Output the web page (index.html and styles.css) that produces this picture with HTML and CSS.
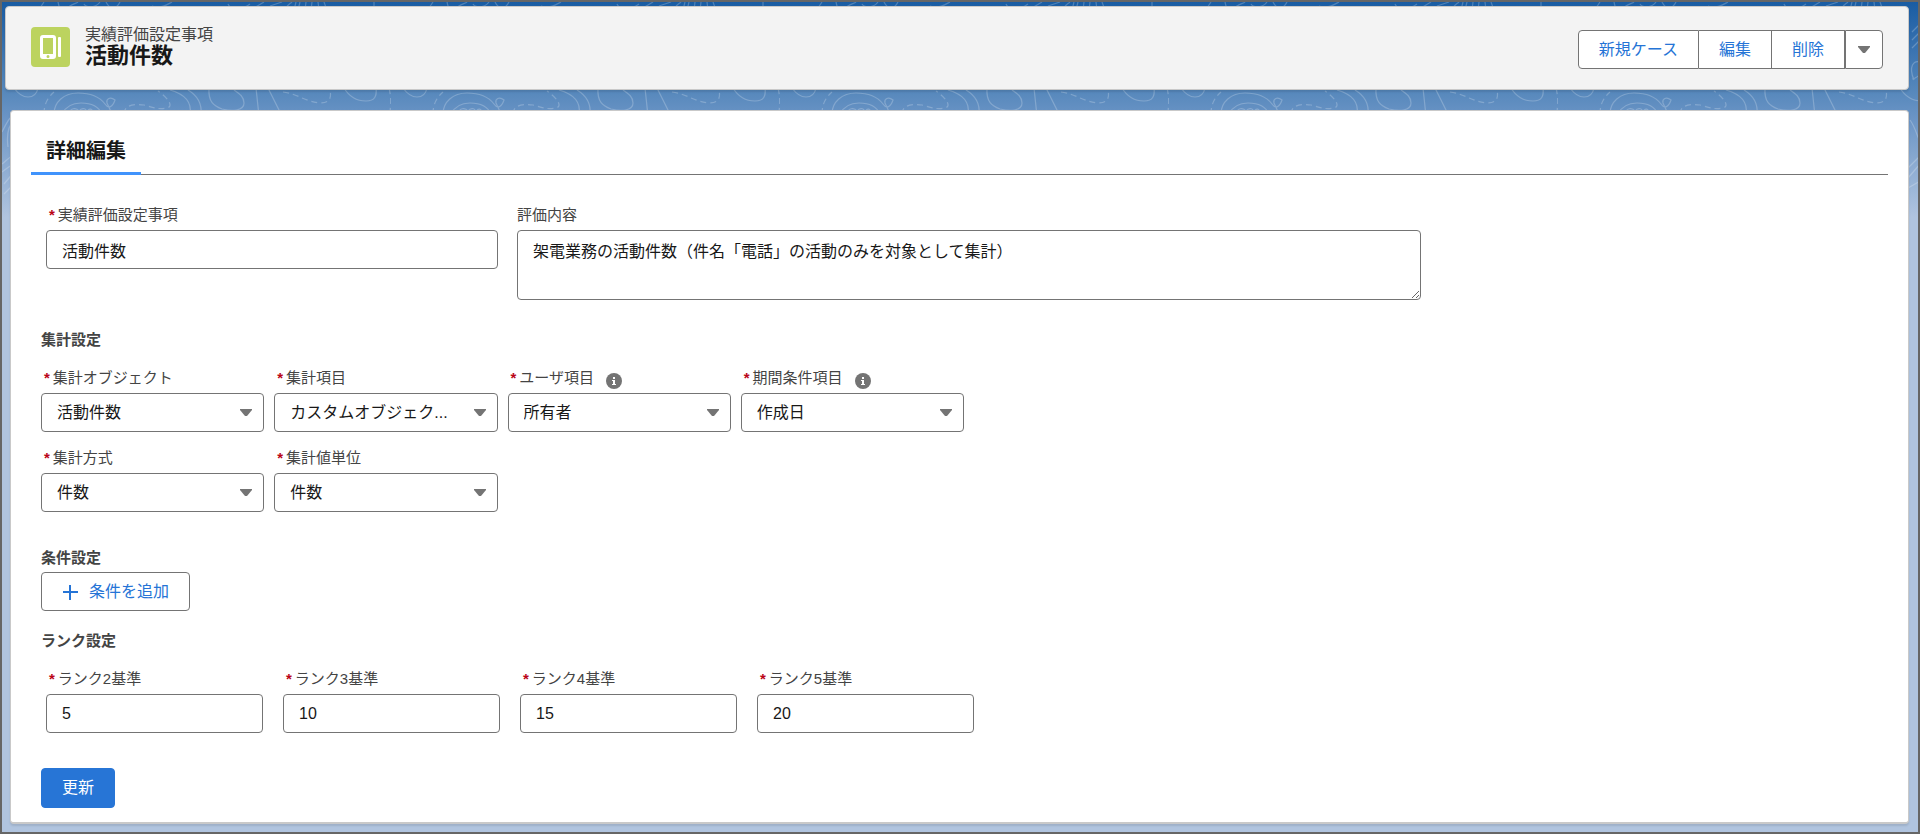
FILE: index.html
```html
<!DOCTYPE html>
<html lang="ja">
<head>
<meta charset="utf-8">
<meta name="viewport" content="width=device-width, initial-scale=1">
<title>活動件数 | 実績評価設定事項</title>
<link rel="stylesheet" href="styles.css">
</head>
<body>
<div class="frame">
  <svg class="backdrop" aria-hidden="true">
    <defs>
      <pattern id="topo" width="389" height="220" patternUnits="userSpaceOnUse">
        <g fill="none" stroke="#fff" stroke-opacity=".22" stroke-width="1.2">
          <path d="M52 112C52 100 62 91 76 91C88 91 97 94 103 102C107 108 111 104 113 98C108 94 104 97 105 101M105 101L110 112"/>
          <path d="M60 112C64 104 70 101 79 101C90 101 97 105 100 112"/>
          <path d="M67 112C68 106 74 105 77 109C80 105 86 106 84 112M86 108C90 105 92 110 89 113"/>
          <path d="M42 112C42 103 45 96 52 90" stroke-dasharray="6 4"/>
          <path d="M122 112C122 102 134 102 142 103C150 105 156 108 165 106C172 104 166 96 156 89" stroke-dasharray="6 4"/>
          <path d="M168 88C182 92 190 100 188 112M186 88C196 94 200 102 199 112"/>
          <path d="M207 86C206 100 212 104 220 107C232 110 242 108 242 101C242 95 238 92 232 88"/>
          <path d="M254 86L257 114M266 86L280 114"/>
          <path d="M281 90C296 92 304 100 318 101C330 101 329 94 328 86" stroke-dasharray="6 4"/>
          <path d="M342 86C348 96 356 99 364 99C373 99 375 94 374 86M12 86C17 93 22 95 26 95C32 95 35 91 36 86"/>
          <path d="M387 86C390 98 388 104 388 114" stroke-dasharray="6 4"/>
          <path d="M38 6L42 0M56 0L58 8M64 8C68 2 74 2 76 0M82 2C84 6 94 6 98 0M104 0C108 8 114 8 118 0M226 2C228 8 240 8 248 2M252 6L262 0M268 4L280 0M284 6C286 2 288 2 290 0M294 0L292 8M298 0L296 8M304 0L303 8M310 0L309 8M316 0L317 8M322 0L325 8M372 0L372 8M150 4C158 8 166 2 170 0"/>
          <path d="M0 130C6 118 10 110 14 118M6 145C4 130 8 122 12 118M0 162C5 158 8 154 14 152M0 170C5 166 8 164 14 160M2 182L12 170M2 192L12 182"/>
          <path d="M354 30L366 18M354 38L366 26M354 46L366 34M356 78C350 64 356 58 362 60C366 66 362 76 354 77M352 118C358 126 360 138 364 144M350 166L362 154M350 176L362 162M350 186L364 178"/>
        </g>
      </pattern>
    </defs>
    <rect width="100%" height="100%" fill="url(#topo)"/>
  </svg>

  <header class="record-header">
    <svg class="record-icon" viewBox="0 0 39 40" aria-hidden="true">
      <rect width="39" height="40" rx="4" fill="#bcd35f"/>
      <path fill="#fff" fill-rule="evenodd" d="M12 8H22A3 3 0 0 1 25 11V29A3 3 0 0 1 22 32H12A3 3 0 0 1 9 29V11A3 3 0 0 1 12 8ZM12 11V27H22V11ZM17 28A1 1 0 0 0 17 31A1 1 0 0 0 17 28Z"/>
      <rect x="27" y="10" width="3" height="20" rx="1" fill="#fff"/>
    </svg>
    <div class="record-title">
      <p class="record-type">実績評価設定事項</p>
      <h1 class="record-name">活動件数</h1>
    </div>
    <div class="button-group">
      <button type="button" class="group-button">新規ケース</button>
      <button type="button" class="group-button">編集</button>
      <button type="button" class="group-button">削除</button>
      <button type="button" class="group-button menu-button" aria-label="その他のアクション"><svg class="arrow" viewBox="0 0 12 7" aria-hidden="true"><path d="M0 0H12V1L7 7H5L0 1Z"/></svg></button>
    </div>
  </header>

  <main class="card">
    <nav class="tabs"><a class="tab" href="#detail" aria-current="page">詳細編集</a></nav>
    <form class="panel" id="detail">
      <div class="grid basic-grid">
        <div class="field">
          <label class="label required" for="name">実績評価設定事項</label>
          <input class="control" id="name" type="text" value="活動件数" required>
        </div>
        <div class="field">
          <label class="label" for="description">評価内容</label>
          <textarea class="control area" id="description">架電業務の活動件数（件名「電話」の活動のみを対象として集計）</textarea>
        </div>
      </div>

      <h2 class="heading summary-heading">集計設定</h2>
      <div class="grid select-grid">
        <div class="field">
          <label class="label required" for="object">集計オブジェクト</label>
          <div class="select-box"><select class="control" id="object"><option>活動件数</option></select><svg class="arrow" viewBox="0 0 12 7" aria-hidden="true"><path d="M0 0H12V1L7 7H5L0 1Z"/></svg></div>
        </div>
        <div class="field">
          <label class="label required" for="item">集計項目</label>
          <div class="select-box"><select class="control" id="item"><option>カスタムオブジェク...</option></select><svg class="arrow" viewBox="0 0 12 7" aria-hidden="true"><path d="M0 0H12V1L7 7H5L0 1Z"/></svg></div>
        </div>
        <div class="field">
          <label class="label required" for="user">ユーザ項目<svg class="info" viewBox="0 0 16 16" aria-hidden="true"><circle cx="8" cy="8" r="8" fill="#747474"/><path fill="#fff" d="M7 4H9V6H7ZM6 7H9V11H10V12H6V11H7V8H6Z"/></svg></label>
          <div class="select-box"><select class="control" id="user"><option>所有者</option></select><svg class="arrow" viewBox="0 0 12 7" aria-hidden="true"><path d="M0 0H12V1L7 7H5L0 1Z"/></svg></div>
        </div>
        <div class="field">
          <label class="label required" for="period">期間条件項目<svg class="info" viewBox="0 0 16 16" aria-hidden="true"><circle cx="8" cy="8" r="8" fill="#747474"/><path fill="#fff" d="M7 4H9V6H7ZM6 7H9V11H10V12H6V11H7V8H6Z"/></svg></label>
          <div class="select-box"><select class="control" id="period"><option>作成日</option></select><svg class="arrow" viewBox="0 0 12 7" aria-hidden="true"><path d="M0 0H12V1L7 7H5L0 1Z"/></svg></div>
        </div>
        <div class="field">
          <label class="label required" for="method">集計方式</label>
          <div class="select-box"><select class="control" id="method"><option>件数</option></select><svg class="arrow" viewBox="0 0 12 7" aria-hidden="true"><path d="M0 0H12V1L7 7H5L0 1Z"/></svg></div>
        </div>
        <div class="field">
          <label class="label required" for="unit">集計値単位</label>
          <div class="select-box"><select class="control" id="unit"><option>件数</option></select><svg class="arrow" viewBox="0 0 12 7" aria-hidden="true"><path d="M0 0H12V1L7 7H5L0 1Z"/></svg></div>
        </div>
      </div>

      <h2 class="heading condition-heading">条件設定</h2>
      <button type="button" class="add-button"><svg class="plus" viewBox="0 0 16 16" aria-hidden="true"><path d="M8 1V16M1 8H16"/></svg>条件を追加</button>

      <h2 class="heading rank-heading">ランク設定</h2>
      <div class="grid rank-grid">
        <div class="field">
          <label class="label required" for="rank2">ランク2基準</label>
          <input class="control" id="rank2" type="text" inputmode="numeric" value="5" required>
        </div>
        <div class="field">
          <label class="label required" for="rank3">ランク3基準</label>
          <input class="control" id="rank3" type="text" inputmode="numeric" value="10" required>
        </div>
        <div class="field">
          <label class="label required" for="rank4">ランク4基準</label>
          <input class="control" id="rank4" type="text" inputmode="numeric" value="15" required>
        </div>
        <div class="field">
          <label class="label required" for="rank5">ランク5基準</label>
          <input class="control" id="rank5" type="text" inputmode="numeric" value="20" required>
        </div>
      </div>

      <button type="submit" class="submit-button">更新</button>
    </form>
  </main>
</div>
</body>
</html>
```
FILE: styles.css
```css
*, *::before, *::after { box-sizing: border-box; }

body {
  margin: 0;
  color: #181818;
  font: 16px/20px "Liberation Sans", "Noto Sans CJK JP", sans-serif;
}

button, input, select, textarea { font: inherit; }

.frame {
  position: relative;
  isolation: isolate;
  min-height: 100vh;
  padding: 4px 9px 8px 3px;
  border: 2px solid #666;
  background: linear-gradient(#195ca3 0, #5788bc 90px, #6a94c5 115px, #b0c4df 215px);
}

.backdrop {
  position: absolute;
  z-index: -1;
  top: 0;
  left: 0;
  width: 100%;
  height: 220px;
}

/* Record header */
.record-header {
  display: flex;
  align-items: flex-start;
  gap: 15px;
  padding: 20px 25px;
  border: 1px solid #c9c9c9;
  border-radius: 4px;
  background: #f3f3f3;
  box-shadow: 0 2px 2px rgba(0, 0, 0, .1);
}

.record-icon { flex: none; width: 39px; height: 40px; }
.record-title { flex: 1; min-width: 0; }
.record-type { margin: 0; color: #444; line-height: 16px; }
.record-name { margin: 0; font-size: 22px; line-height: 26px; }

.button-group { display: flex; align-self: flex-end; }

.group-button {
  height: 39px;
  padding: 0 20px;
  border: 1px solid #747474;
  border-left-width: 0;
  background: #fff;
  color: #2574d6;
  cursor: pointer;
}

.group-button:first-child { border-left-width: 1px; border-radius: 4px 0 0 4px; }

.menu-button {
  display: flex;
  align-items: center;
  padding: 0 12px;
  border-left-width: 1px;
  border-radius: 0 4px 4px 0;
}

.arrow { display: block; width: 12px; height: 7px; fill: #747474; }

/* Card and tabs */
.card {
  margin: 20px 0 0 5px;
  padding: 0 20px 14px;
  border: 1px solid #c9c9c9;
  border-bottom-width: 2px;
  border-radius: 4px;
  background: #fff;
  box-shadow: 0 2px 2px rgba(0, 0, 0, .1);
}

.tabs { display: flex; padding-top: 28px; border-bottom: 1px solid #747474; }

.tab {
  margin-bottom: -1px;
  padding: 0 15px 9px;
  border-bottom: 3px solid #4093fc;
  color: #181818;
  font-size: 20px;
  font-weight: 700;
  line-height: 24px;
  text-decoration: none;
}

.panel { padding: 30px 10px 0; }

/* Fields */
.grid { display: grid; }
.basic-grid { grid-template-columns: 1fr 2fr; gap: 19px; max-width: 1380px; padding-left: 5px; }
.select-grid { grid-template-columns: repeat(4, 1fr); gap: 16px 10px; max-width: 923px; }
.rank-grid { grid-template-columns: repeat(4, 1fr); gap: 20px; max-width: 933px; padding-left: 5px; }

.field { min-width: 0; }

.label {
  display: flex;
  height: 20px;
  margin-bottom: 5px;
  color: #444;
  font-size: 15px;
}

.required { padding-left: 3px; }
.required::before { content: "*"; margin-right: 3px; color: #ba0517; font-weight: 700; }

.info { width: 16px; height: 16px; margin: 5px 0 0 12px; }

.control {
  display: block;
  width: 100%;
  height: 39px;
  margin: 0;
  padding: 0 15px;
  border: 1px solid #747474;
  border-radius: 4px;
  background: #fff;
  color: #181818;
}

.area { height: 70px; padding-top: 11px; padding-bottom: 11px; resize: vertical; }

.select-box { position: relative; }
.select-box .control { padding-right: 32px; appearance: none; }
.select-box .arrow { position: absolute; top: 16px; right: 12px; pointer-events: none; }

.heading { margin: 0; color: #444; font-size: 15px; line-height: 20px; }
.summary-heading { margin: 30px 0 18px; }
.condition-heading { margin: 36px 0 4px; }
.rank-heading { margin: 20px 0 18px; }

/* Form buttons */
.add-button {
  display: flex;
  align-items: center;
  gap: 11px;
  height: 39px;
  padding: 0 20px;
  border: 1px solid #747474;
  border-radius: 4px;
  background: #fff;
  color: #2574d6;
  cursor: pointer;
}

.plus { width: 16px; height: 16px; fill: none; stroke: #2574d6; stroke-width: 2; }

.submit-button {
  display: block;
  height: 40px;
  margin-top: 35px;
  padding: 0 20px;
  border: 1px solid #2775d6;
  border-radius: 4px;
  background: #2775d6;
  color: #fff;
  cursor: pointer;
}
```
